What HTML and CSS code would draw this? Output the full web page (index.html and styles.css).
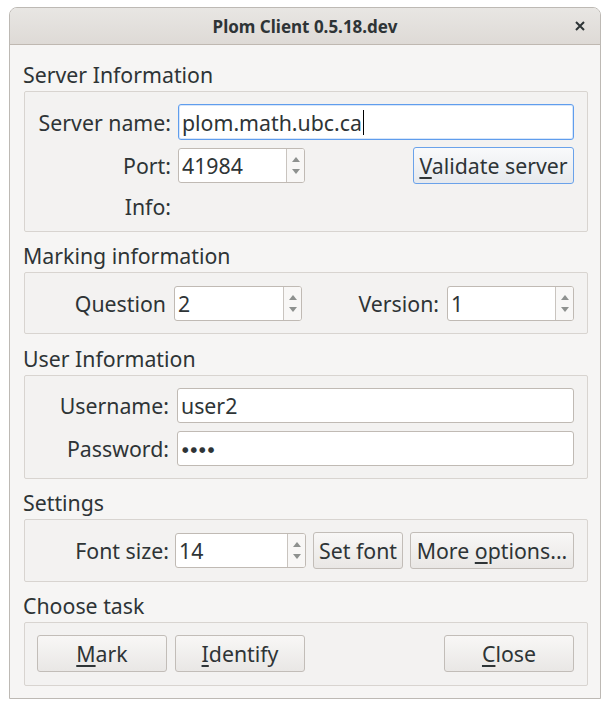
FILE: index.html
```html
<!DOCTYPE html>
<html>
<head>
<meta charset="utf-8">
<link rel="stylesheet" href="styles.css">
</head>
<body>
<div class="window">
  <div class="titlebar">
    <span class="title">Plom Client 0.5.18.dev</span>
    <span class="close-x">
      <svg width="10" height="10" viewBox="0 0 10 10"><path d="M1 1L9 9M9 1L1 9" stroke="#2e3436" stroke-width="2"/></svg>
    </span>
  </div>
  <div class="content">
    <div class="group">
      <div class="glabel">Server Information</div>
      <div class="frame server">
        <label class="lbl">Server name:</label>
        <div class="entry focus">plom.math.ubc.ca<span class="caret"></span></div>
        <label class="lbl">Port:</label>
        <div class="row2">
          <div class="spin w127"><span class="val">41984</span><span class="arrows"><i class="up"></i><i class="down"></i></span></div>
          <button class="btn default"><u>V</u>alidate server</button>
        </div>
        <label class="lbl info">Info:</label>
        <div></div>
      </div>
    </div>

    <div class="group">
      <div class="glabel">Marking information</div>
      <div class="frame marking">
        <label class="lbl">Question</label>
        <div class="spin"><span class="val">2</span><span class="arrows"><i class="up"></i><i class="down"></i></span></div>
        <label class="lbl">Version:</label>
        <div class="spin"><span class="val">1</span><span class="arrows"><i class="up"></i><i class="down"></i></span></div>
      </div>
    </div>

    <div class="group user-group">
      <div class="glabel">User Information</div>
      <div class="frame user">
        <label class="lbl">Username:</label>
        <div class="entry">user2</div>
        <label class="lbl">Password:</label>
        <div class="entry pw">●●●●</div>
      </div>
    </div>

    <div class="group">
      <div class="glabel">Settings</div>
      <div class="frame settings">
        <label class="lbl">Font size:</label>
        <div class="spin w131"><span class="val">14</span><span class="arrows"><i class="up"></i><i class="down"></i></span></div>
        <button class="btn setfont">Set font</button>
        <button class="btn more">More <u>o</u>ptions...</button>
      </div>
    </div>

    <div class="group">
      <div class="glabel">Choose task</div>
      <div class="frame task">
        <button class="btn task-btn"><u>M</u>ark</button>
        <button class="btn task-btn"><u>I</u>dentify</button>
        <span class="spacer"></span>
        <button class="btn task-btn"><u>C</u>lose</button>
      </div>
    </div>
  </div>
</div>
</body>
</html>
```

FILE: styles.css
```css
html, body {
  margin: 0;
  padding: 0;
  background: #ffffff;
}
body {
  font-family: "Noto Sans", "DejaVu Sans", sans-serif;
  color: #2e3436;
  font-size: 21.3px;
}
.window {
  margin: 7px 0 0 9px;
  width: 590px;
  height: 690px;
  border: 1px solid #bdb9b4;
  border-radius: 8px 8px 0 0;
  background: #f6f5f4;
  display: flex;
  flex-direction: column;
  overflow: hidden;
}
.titlebar {
  height: 36px;
  flex: none;
  background: linear-gradient(#e8e6e3, #dedad6);
  border-bottom: 1px solid #bfb8b1;
  display: flex;
  align-items: center;
  justify-content: center;
  position: relative;
}
.title {
  font-weight: bold;
  font-size: 17px;
  color: #2e3436;
}
.close-x {
  position: absolute;
  right: 15px;
  top: 13px;
  width: 10px;
  height: 10px;
  display: flex;
}
.content {
  padding: 16px 12px 13px 14px;
  display: flex;
  flex-direction: column;
  gap: 10px;
}
.user-group {
  margin-top: 1px;
}
.glabel {
  height: 28px;
  line-height: 28px;
  margin-left: -1px;
  margin-bottom: 2px;
}
.frame {
  border: 1px solid #d8d4d0;
  border-radius: 2px;
  background: #f3f2f1;
  padding: 12px 13px 12px 12px;
}
.lbl {
  text-align: right;
  align-self: center;
  white-space: nowrap;
}
.server {
  display: grid;
  grid-template-columns: 134px 1fr;
  column-gap: 7px;
  row-gap: 7px;
  height: 115px;
  align-content: start;
}
.row2 {
  display: flex;
  align-items: center;
  justify-content: space-between;
}
.info {
  height: 32px;
  line-height: 32px;
}
.entry {
  box-sizing: border-box;
  height: 35px;
  border: 1px solid #c0bab4;
  border-radius: 3px;
  background: #ffffff;
  padding: 0 3px;
  display: flex;
  align-items: center;
  white-space: nowrap;
}
.entry.focus {
  height: 36px;
  border-color: #5f9ded;
  box-shadow: inset 0 0 0 1px rgba(95, 157, 237, 0.25);
}
.caret {
  display: inline-block;
  width: 1px;
  height: 25px;
  background: #000;
  margin-left: 1px;
}
.entry.pw {
  font-size: 7.5px;
  letter-spacing: 2px;
  padding-left: 4px;
}
.spin {
  box-sizing: border-box;
  height: 35px;
  border: 1px solid #c0bab4;
  border-radius: 3px;
  background: #ffffff;
  display: flex;
  align-items: stretch;
}
.spin .val {
  flex: 1;
  padding-left: 3px;
  display: flex;
  align-items: center;
}
.arrows {
  width: 17px;
  border-left: 1px solid #c9c4bf;
  background: #f8f7f6;
  border-radius: 0 2px 2px 0;
  display: flex;
  flex-direction: column;
  align-items: center;
  justify-content: center;
  gap: 7px;
}
.arrows i {
  width: 0;
  height: 0;
  border-left: 4px solid transparent;
  border-right: 4px solid transparent;
}
.arrows .up {
  border-bottom: 5px solid #8e918f;
}
.arrows .down {
  border-top: 5px solid #8e918f;
}
.w127 { width: 127px; }
.w131 { width: 131px; }
.btn {
  font-family: inherit;
  font-size: 21.3px;
  color: #2e3436;
  box-sizing: border-box;
  height: 37px;
  border: 1px solid #c2bdb8;
  border-radius: 3px;
  background: linear-gradient(#f8f7f6, #e9e7e5);
  padding: 0 3px;
  margin: 0;
  white-space: nowrap;
}
.btn u {
  text-decoration-thickness: 2px;
  text-underline-offset: 3px;
}
.btn.default {
  border-color: #6aa2ea;
  background: linear-gradient(#f9fafb, #e6e9ed);
  width: 161px;
}
.marking {
  display: grid;
  grid-template-columns: 1fr 128px 1fr 127px;
  column-gap: 8px;
  padding-top: 13px;
  padding-bottom: 12px;
}
.user {
  display: grid;
  grid-template-columns: 132px 1fr;
  column-gap: 8px;
  row-gap: 8px;
  padding-left: 12px;
  padding-right: 13px;
}
.settings {
  display: flex;
  justify-content: flex-end;
  align-items: center;
  gap: 7px;
  padding-top: 12px;
  padding-bottom: 12px;
}
.settings .lbl { margin-right: -1px; }
.setfont { width: 90px; }
.more { width: 164px; }
.task {
  display: flex;
  align-items: center;
  gap: 8px;
  padding-top: 12px;
  padding-bottom: 13px;
}
.task-btn { width: 130px; }
.spacer { flex: 1; }
```
